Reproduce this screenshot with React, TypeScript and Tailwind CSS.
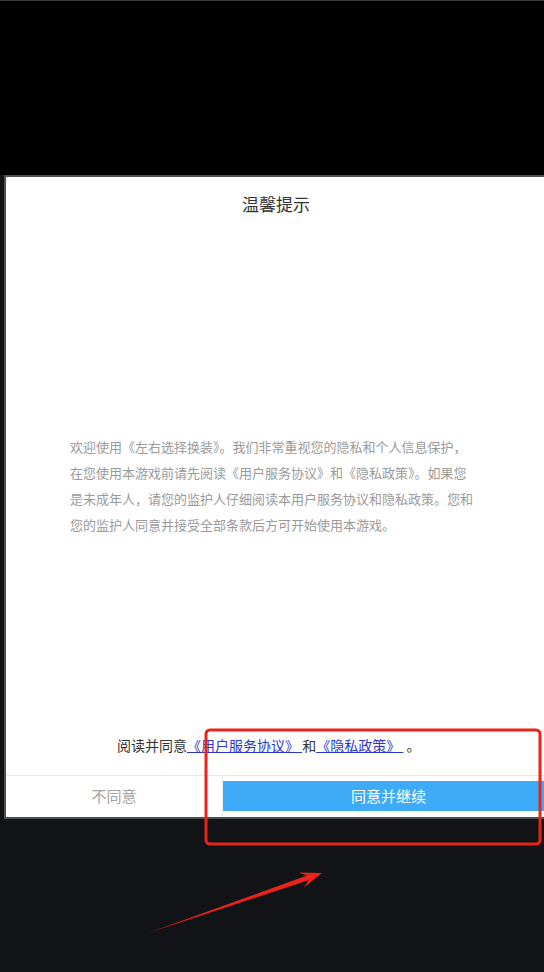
import React from 'react';

const font = { fontFamily: '"Noto Sans CJK SC", "Noto Sans", sans-serif' };

function Annotation() {
  // red highlight box + arrow drawn over the screenshot
  return (
    <svg className="absolute inset-0 pointer-events-none" width="544" height="972" viewBox="0 0 544 972">
      <rect x="206" y="730" width="334" height="114" rx="4" fill="none" stroke="#ea2419" strokeWidth="3" />
      <polygon
        points="148,933 307,875.5 298.6,872.6 322,873 303.8,887.8 308.6,880.3"
        fill="#ea2419"
      />
    </svg>
  );
}

function App() {
  return (
    <div className="relative w-[544px] h-[972px] overflow-hidden bg-[#111316] flex flex-col" style={font}>
      <div className="h-[175px] shrink-0 bg-black border-t border-[#3a3a3a]" />
      <div className="ml-[4px] w-[560px] shrink-0 bg-white border-2 border-[#4f4f4f] flex flex-col">
        <div className="pt-[14px] pr-[16px] text-center text-[17px] leading-[26px] text-[#333]">温馨提示</div>

        <p className="mt-[217px] ml-[64px] w-[404px] text-[13px] leading-[26px] text-[#9a9a9a]">
          欢迎使用《左右选择换装》。我们非常重视您的隐私和个人信息保护，在您使用本游戏前请先阅读《用户服务协议》和《隐私政策》。如果您是未成年人，请您的监护人仔细阅读本用户服务协议和隐私政策。您和您的监护人同意并接受全部条款后方可开始使用本游戏。
        </p>

        <div className="mt-[196px] mb-[19px] pl-[111px] text-[14px] leading-[22px] text-[#333] whitespace-nowrap">
          阅读并同意
          <span className="underline text-[#2d35d0]">{'《用户服务协议》\u00a0'}</span>
          和
          <span className="underline text-[#2d35d0]">{'《隐私政策》\u00a0'}</span>
          {'\u00a0。'}
        </div>

        <div className="border-t border-[#e6e6e6] flex h-[42px]">
          <div className="w-[216px] flex items-center justify-center text-[15px] text-[#a3a3a3]">不同意</div>
          <div className="w-px bg-[#ececec]" />
          <div className="w-[321px] pt-[5px] pb-[6px]">
            <div className="h-full bg-[#3eabf9] flex items-center justify-center pl-[10px] text-[15px] text-white">
              同意并继续
            </div>
          </div>
        </div>
      </div>
      <Annotation />
    </div>
  );
}

export default App;
